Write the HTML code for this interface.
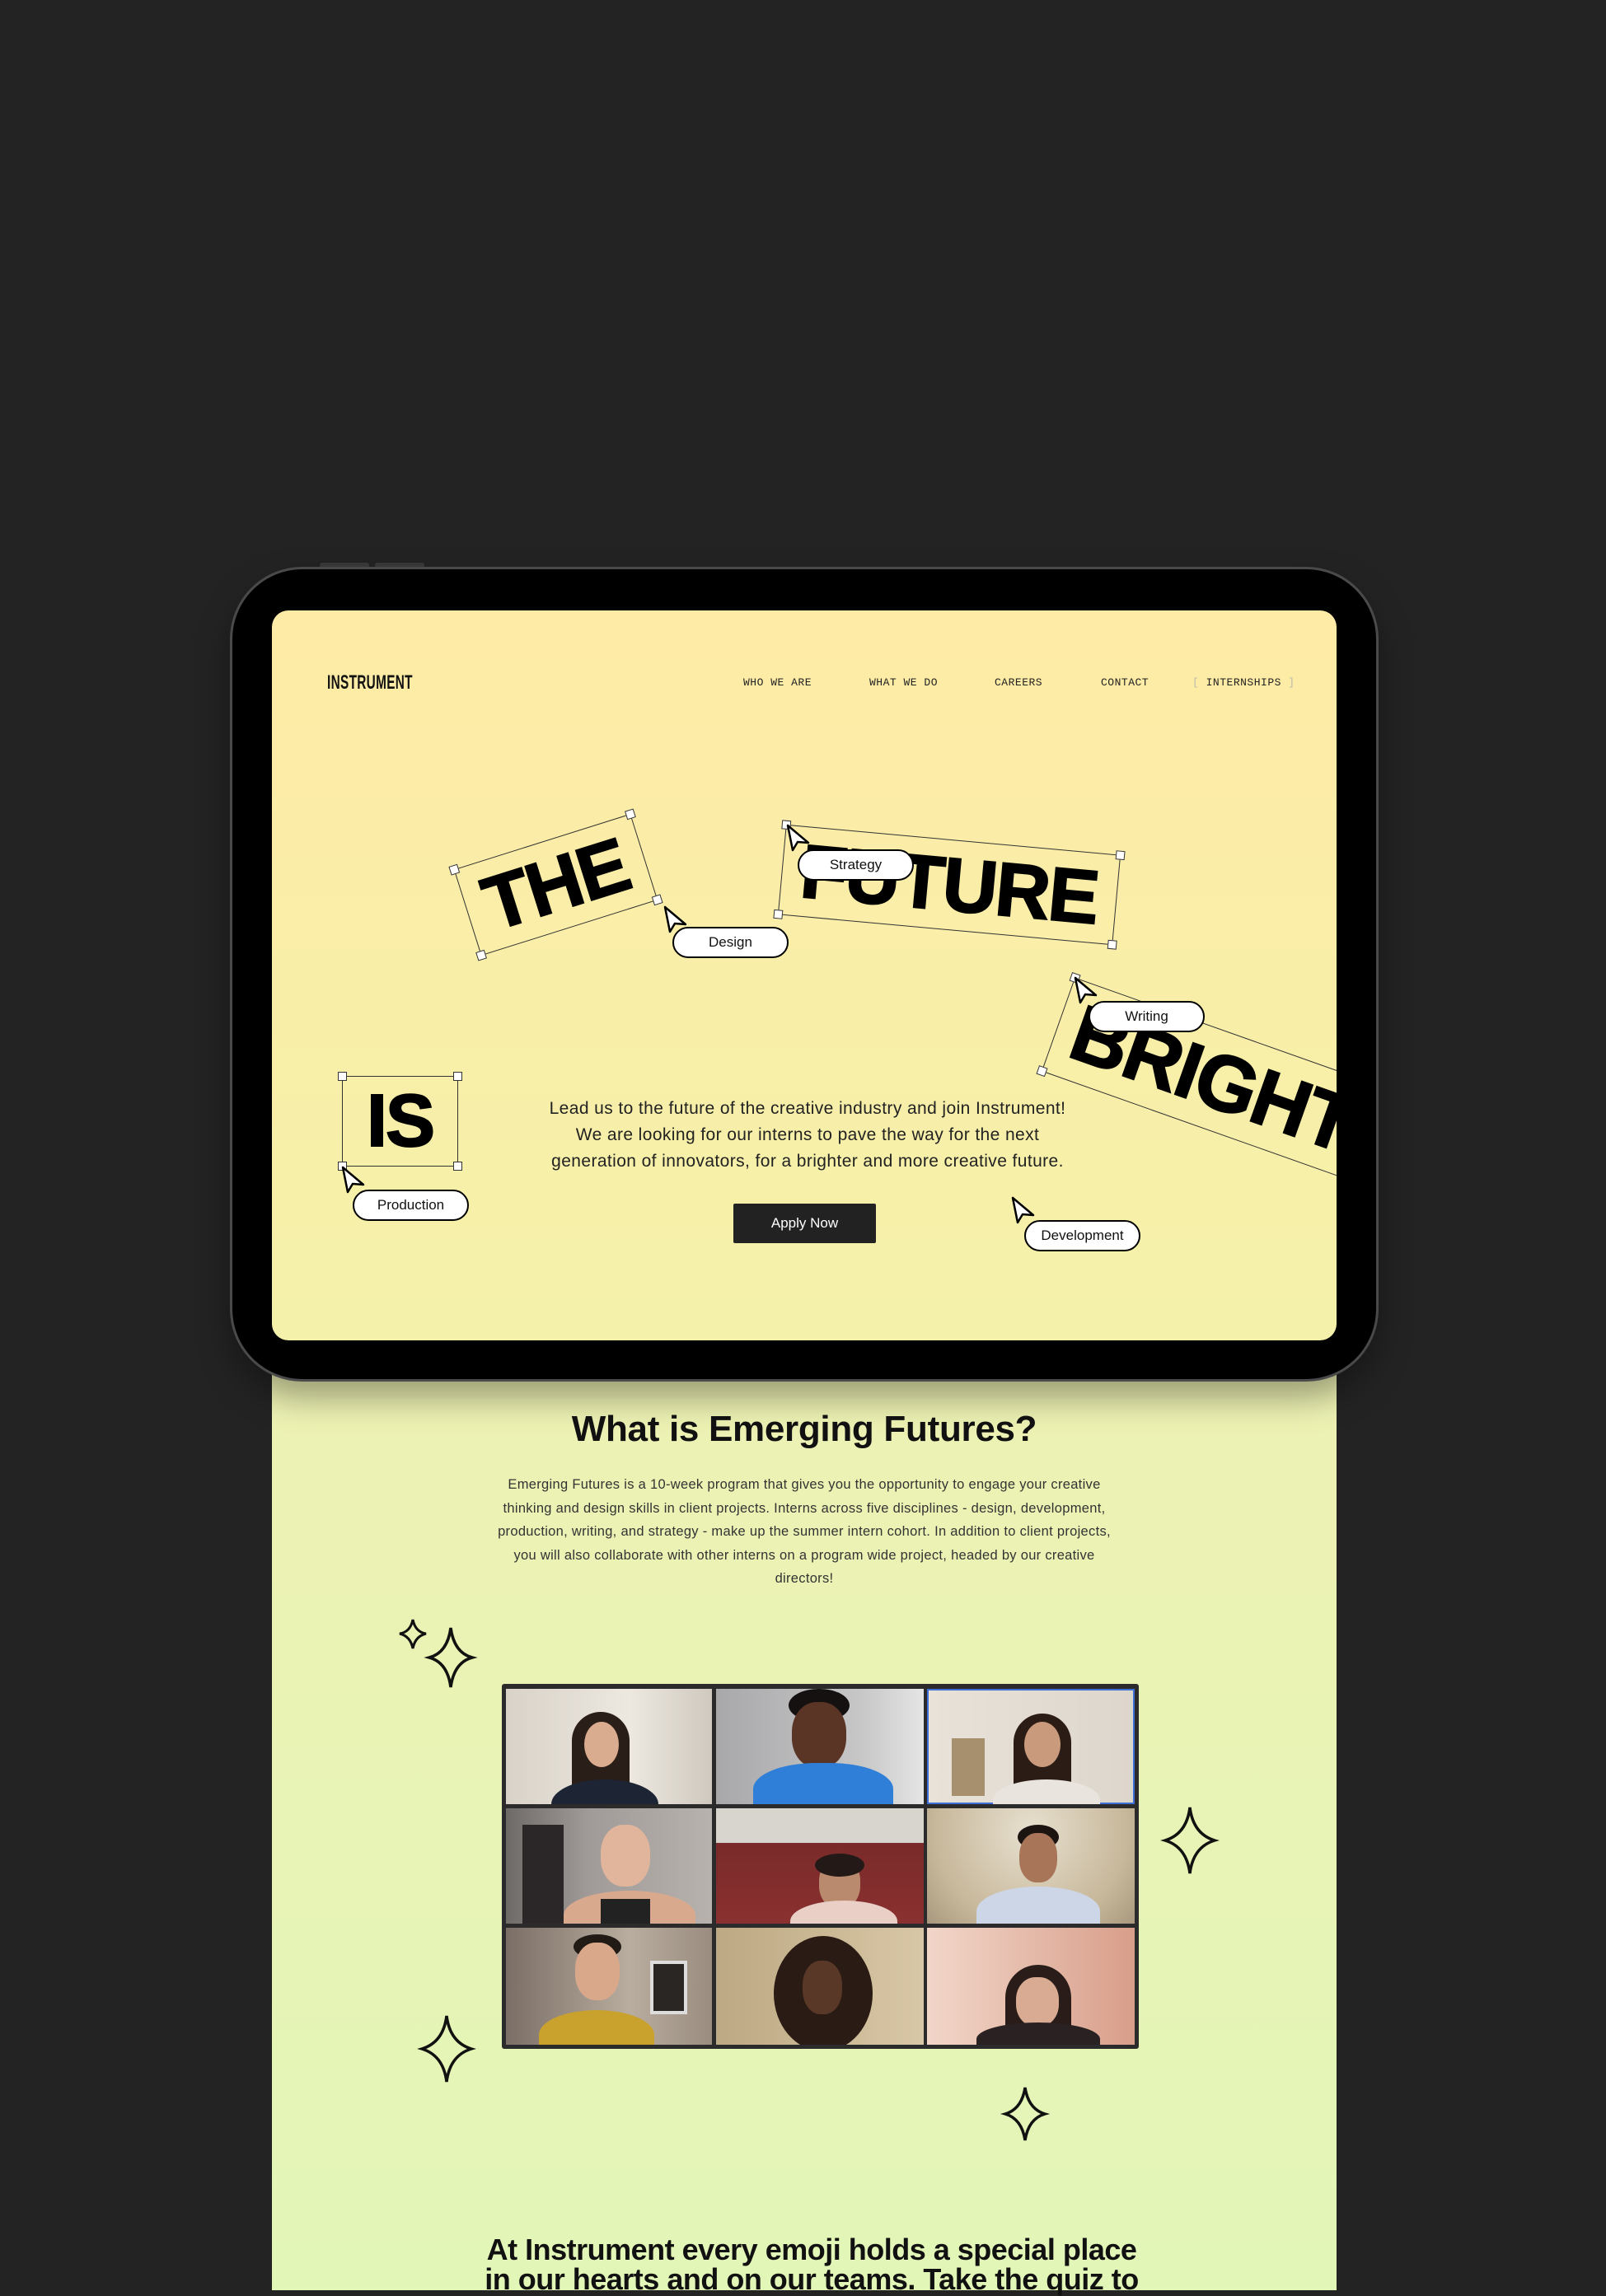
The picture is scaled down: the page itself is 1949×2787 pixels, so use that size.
<!DOCTYPE html>
<html><head><meta charset="utf-8"><style>
*{margin:0;padding:0;box-sizing:border-box}
body{width:1949px;height:2768px;background:#232323;position:relative;overflow:hidden;font-family:"Liberation Sans",sans-serif}
.abs{position:absolute}
.page{left:330px;top:1600px;width:1292px;height:1180px;background:linear-gradient(#eef1b2,#e2f6b8)}
.ipad{left:279px;top:688px;width:1394px;height:989px;border-radius:88px;background:#000;border:3px solid #4a4a4a;box-shadow:0 20px 40px rgba(0,0,0,.35)}
.screen{left:330px;top:741px;width:1292px;height:886px;border-radius:20px;background:linear-gradient(#feeba6,#f4f1aa);overflow:hidden}
.nav{font-family:"Liberation Mono",monospace;font-size:13px;color:#222;top:80px;letter-spacing:.5px}
.logo{left:67px;top:74px;font-family:"Liberation Sans Narrow","Liberation Sans",sans-serif;font-size:24px;font-weight:bold;transform:scaleX(.64);transform-origin:left;letter-spacing:.5px;color:#111}
.box{border:1.5px solid #333;display:flex;align-items:center;justify-content:center}
.box b{font-family:"Liberation Sans",sans-serif;font-weight:900;color:#000;letter-spacing:-2px;-webkit-text-stroke:2px #000}
.h{position:absolute;width:11px;height:11px;background:#fff;border:1.5px solid #333}
.pill{position:absolute;width:141px;height:38px;margin:-19px 0 0 -70px;background:#fff;border:2.5px solid #000;border-radius:20px;font-size:17px;display:flex;align-items:center;justify-content:center;color:#111}
.cur{position:absolute;width:34px;height:38px}
.para{left:100px;top:589px;width:1100px;text-align:center;font-size:21px;letter-spacing:.4px;line-height:32px;color:#222}
.btn{left:560px;top:720px;width:173px;height:48px;background:#222;color:#fff;font-size:17px;display:flex;align-items:center;justify-content:center;border-radius:2px}
.cell{position:absolute;overflow:hidden}
</style></head><body>
<div class="abs" style="left:388px;top:683px;width:60px;height:6px;background:#3a3a3a;border-radius:3px"></div>
<div class="abs" style="left:455px;top:683px;width:60px;height:6px;background:#3a3a3a;border-radius:3px"></div>
<div class="abs page"></div>
<div class="abs ipad"></div>
<div class="abs screen">
 <div class="abs logo">INSTRUMENT</div>
 <div class="abs nav" style="left:572px">WHO WE ARE</div>
 <div class="abs nav" style="left:725px">WHAT WE DO</div>
 <div class="abs nav" style="left:877px">CAREERS</div>
 <div class="abs nav" style="left:1006px">CONTACT</div>
 <div class="abs nav" style="left:1117px"><span style="color:#bba">[</span> INTERNSHIPS <span style="color:#bba">]</span></div>

 <div class="abs box" style="left:232px;top:278px;width:225px;height:110px;transform:rotate(-17.5deg)"><b style="font-size:92px">THE</b>
  <div class="h" style="left:-6px;top:-6px"></div><div class="h" style="right:-6px;top:-6px"></div><div class="h" style="left:-6px;bottom:-6px"></div><div class="h" style="right:-6px;bottom:-6px"></div></div>
 <div class="abs box" style="left:618px;top:278px;width:408px;height:110px;transform:rotate(5.2deg)"><b style="font-size:92px">FUTURE</b>
  <div class="h" style="left:-6px;top:-6px"></div><div class="h" style="right:-6px;top:-6px"></div><div class="h" style="left:-6px;bottom:-6px"></div><div class="h" style="right:-6px;bottom:-6px"></div></div>
 <div class="abs box" style="left:942px;top:512px;width:420px;height:121px;transform:rotate(19.5deg);justify-content:flex-start;padding-left:20px"><b style="font-size:96px">BRIGHT</b>
  <div class="h" style="left:-6px;top:-6px"></div><div class="h" style="left:-6px;bottom:-6px"></div></div>
 <div class="abs box" style="left:85px;top:565px;width:141px;height:110px"><b style="font-size:90px">IS</b>
  <div class="h" style="left:-6px;top:-6px"></div><div class="h" style="right:-6px;top:-6px"></div><div class="h" style="left:-6px;bottom:-6px"></div><div class="h" style="right:-6px;bottom:-6px"></div></div>

 <svg class="cur" style="left:474px;top:357px" viewBox="0 0 34 38"><path d="M3 3 L9 33 L15 23 L28 24 Z" fill="#fff" stroke="#000" stroke-width="2.5" stroke-linejoin="round"/></svg>
 <svg class="cur" style="left:623px;top:258px" viewBox="0 0 34 38"><path d="M3 3 L9 33 L15 23 L28 24 Z" fill="#fff" stroke="#000" stroke-width="2.5" stroke-linejoin="round"/></svg>
 <svg class="cur" style="left:972px;top:443px" viewBox="0 0 34 38"><path d="M3 3 L9 33 L15 23 L28 24 Z" fill="#fff" stroke="#000" stroke-width="2.5" stroke-linejoin="round"/></svg>
 <svg class="cur" style="left:83px;top:673px" viewBox="0 0 34 38"><path d="M3 3 L9 33 L15 23 L28 24 Z" fill="#fff" stroke="#000" stroke-width="2.5" stroke-linejoin="round"/></svg>
 <svg class="cur" style="left:896px;top:710px" viewBox="0 0 34 38"><path d="M3 3 L9 33 L15 23 L28 24 Z" fill="#fff" stroke="#000" stroke-width="2.5" stroke-linejoin="round"/></svg>

 <div class="pill" style="left:708px;top:309px">Strategy</div>
 <div class="pill" style="left:556px;top:403px">Design</div>
 <div class="pill" style="left:1061px;top:493px">Writing</div>
 <div class="pill" style="left:168px;top:722px">Production</div>
 <div class="pill" style="left:983px;top:759px">Development</div>

 <div class="abs para">Lead us to the future of the creative industry and join Instrument!<br>We are looking for our interns to pave the way for the next<br>generation of innovators, for a brighter and more creative future.</div>
 <div class="abs btn">Apply Now</div>
</div>

<div class="abs" style="left:330px;top:1710px;width:1292px;text-align:center;font-size:44px;font-weight:900;color:#111;letter-spacing:-.3px">What is Emerging Futures?</div>
<div class="abs" style="left:596px;top:1788px;width:760px;text-align:center;font-size:16.5px;letter-spacing:.3px;line-height:28.5px;color:#333">Emerging Futures is a 10-week program that gives you the opportunity to engage your creative thinking and design skills in client projects. Interns across five disciplines - design, development, production, writing, and strategy - make up the summer intern cohort. In addition to client projects, you will also collaborate with other interns on a program wide project, headed by our creative directors!</div>

<svg class="abs" style="left:0;top:0;width:1949px;height:2768px;pointer-events:none" viewBox="0 0 1949 2768">
 <g fill="none" stroke="#111" stroke-width="3.5">
  <path d="M501 1966 Q504 1981 517 1983 Q504 1986 501 2001 Q498 1986 485 1983 Q498 1981 501 1966Z" stroke-width="3"/>
  <path d="M547 1976 Q551 2006 573 2012 Q551 2018 547 2048 Q543 2018 521 2012 Q543 2006 547 1976Z"/>
  <path d="M1444 2194 Q1448 2226 1474 2234 Q1448 2242 1444 2274 Q1440 2242 1414 2234 Q1440 2226 1444 2194Z"/>
  <path d="M542 2447 Q546 2479 572 2487 Q546 2495 542 2527 Q538 2495 512 2487 Q538 2479 542 2447Z"/>
  <path d="M1244 2534 Q1248 2560 1268 2566 Q1248 2572 1244 2598 Q1240 2572 1220 2566 Q1240 2560 1244 2534Z"/>
 </g>
</svg>

<div class="abs" style="left:609px;top:2044px;width:773px;height:443px;background:#2b2b2b;border-radius:3px">
 <div class="cell" style="left:5px;top:6px;width:250px;height:140px;background:linear-gradient(90deg,#d8d2c8,#ede8e0 60%,#cfc9bf)">
  <div class="abs" style="left:80px;top:28px;width:70px;height:120px;border-radius:35px 35px 10px 10px;background:#2a1e18"></div>
  <div class="abs" style="left:95px;top:40px;width:42px;height:55px;border-radius:50%;background:#d9ab8f"></div>
  <div class="abs" style="left:55px;top:110px;width:130px;height:60px;border-radius:50% 50% 0 0;background:#1d2433"></div></div>
 <div class="cell" style="left:260px;top:6px;width:252px;height:140px;background:linear-gradient(90deg,#a8a8aa,#c7c7c8 70%,#e5e5e5)">
  <div class="abs" style="left:88px;top:0;width:74px;height:40px;border-radius:50%;background:#151111"></div>
  <div class="abs" style="left:92px;top:16px;width:66px;height:80px;border-radius:45%;background:#5a3424"></div>
  <div class="abs" style="left:45px;top:90px;width:170px;height:70px;border-radius:45% 45% 0 0;background:#2f7fd9"></div></div>
 <div class="cell" style="left:516px;top:6px;width:252px;height:140px;background:linear-gradient(90deg,#e8e2d8,#ddd6cc);outline:2px solid #3e6fd8;outline-offset:-2px">
  <div class="abs" style="left:30px;top:60px;width:40px;height:70px;background:#a7906e"></div>
  <div class="abs" style="left:105px;top:30px;width:70px;height:120px;border-radius:35px 35px 10px 10px;background:#2b1d16"></div>
  <div class="abs" style="left:118px;top:40px;width:44px;height:55px;border-radius:50%;background:#c99a7c"></div>
  <div class="abs" style="left:80px;top:110px;width:130px;height:50px;border-radius:50% 50% 0 0;background:#e9e4de"></div></div>
 <div class="cell" style="left:5px;top:151px;width:250px;height:140px;background:linear-gradient(90deg,#6e6a68,#a09a98 40%,#b8b2ae)">
  <div class="abs" style="left:20px;top:20px;width:50px;height:120px;background:#2b2628"></div>
  <div class="abs" style="left:115px;top:20px;width:60px;height:75px;border-radius:45%;background:#e0b59c"></div>
  <div class="abs" style="left:70px;top:100px;width:160px;height:60px;border-radius:50% 50% 0 0;background:#d9a98e"></div>
  <div class="abs" style="left:115px;top:110px;width:60px;height:40px;background:#222"></div></div>
 <div class="cell" style="left:260px;top:151px;width:252px;height:140px;background:linear-gradient(#d8d4ce 30%,#7a2a2a 30%,#8a3030)">
  <div class="abs" style="left:125px;top:60px;width:50px;height:62px;border-radius:45%;background:#b98a6e"></div>
  <div class="abs" style="left:120px;top:55px;width:60px;height:28px;border-radius:50%;background:#231a17"></div>
  <div class="abs" style="left:90px;top:112px;width:130px;height:50px;border-radius:50% 50% 0 0;background:#e9cfc6"></div></div>
 <div class="cell" style="left:516px;top:151px;width:252px;height:140px;background:radial-gradient(circle at 50% 20%,#e7e0cf,#c7b79a 70%,#a8987d)">
  <div class="abs" style="left:110px;top:20px;width:50px;height:30px;border-radius:50%;background:#1b1411"></div>
  <div class="abs" style="left:112px;top:30px;width:46px;height:60px;border-radius:45%;background:#a87558"></div>
  <div class="abs" style="left:60px;top:95px;width:150px;height:60px;border-radius:50% 50% 0 0;background:#cdd6e6"></div></div>
 <div class="cell" style="left:5px;top:296px;width:250px;height:142px;background:linear-gradient(90deg,#7a6e66,#b9ad9f 60%,#9a8d80)">
  <div class="abs" style="left:175px;top:40px;width:45px;height:65px;background:#2a2624;border:4px solid #ddd"></div>
  <div class="abs" style="left:82px;top:8px;width:58px;height:30px;border-radius:50%;background:#221a15"></div>
  <div class="abs" style="left:84px;top:18px;width:54px;height:70px;border-radius:45%;background:#d9a88b"></div>
  <div class="abs" style="left:40px;top:100px;width:140px;height:60px;border-radius:50% 50% 0 0;background:#c9a22e"></div></div>
 <div class="cell" style="left:260px;top:296px;width:252px;height:142px;background:linear-gradient(90deg,#bda983,#d8c7a6)">
  <div class="abs" style="left:70px;top:10px;width:120px;height:140px;border-radius:50%;background:#2a1c14"></div>
  <div class="abs" style="left:105px;top:40px;width:48px;height:65px;border-radius:45%;background:#5a3828"></div></div>
 <div class="cell" style="left:516px;top:296px;width:252px;height:142px;background:linear-gradient(90deg,#f2d6c9,#d89e8a)">
  <div class="abs" style="left:95px;top:45px;width:80px;height:110px;border-radius:40px 40px 5px 5px;background:#2a1d19"></div>
  <div class="abs" style="left:108px;top:60px;width:52px;height:60px;border-radius:45%;background:#d9ab92"></div>
  <div class="abs" style="left:60px;top:115px;width:150px;height:40px;border-radius:50% 50% 0 0;background:#2a2222"></div></div>
</div>

<div class="abs" style="left:540px;top:2713px;width:890px;text-align:center;font-size:36px;font-weight:900;color:#111;line-height:36px;letter-spacing:-.5px">At Instrument every emoji holds a special place<br>in our hearts and on our teams. Take the quiz to</div>
</body></html>
